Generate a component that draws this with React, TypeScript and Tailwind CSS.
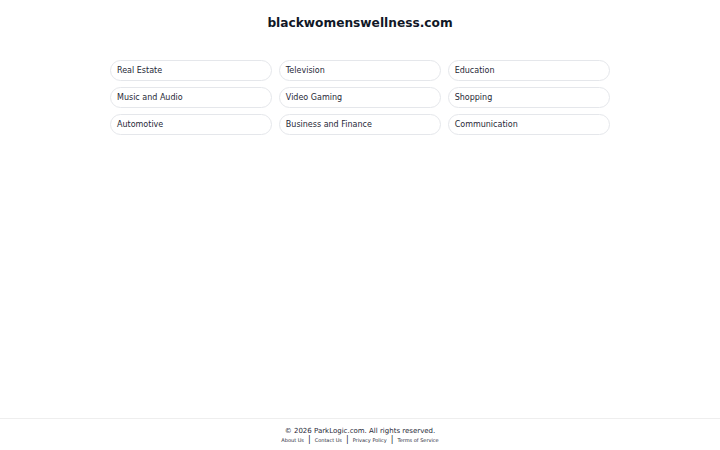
import React from "react";

const items = [
  "Real Estate",
  "Television",
  "Education",
  "Music and Audio",
  "Video Gaming",
  "Shopping",
  "Automotive",
  "Business and Finance",
  "Communication",
];

export default function App() {
  return (
    <div
      className="w-[720px] h-[450px] bg-white flex flex-col text-[#111827]"
      style={{ fontFamily: '"DejaVu Sans", sans-serif' }}
    >
      <div className="flex-1 flex flex-col">
        <h1 className="text-[12.2px] font-bold text-center pt-[15px] leading-[16px]">
          blackwomenswellness.com
        </h1>
        <div className="w-[500px] mx-auto mt-[29px] grid grid-cols-3 gap-x-[6.5px] gap-y-[6px]">
          {items.map((t) => (
            <div
              key={t}
              className="h-[21px] rounded-full border border-[#e5e7eb] flex items-center px-[6px] pt-[1px] text-[8px] leading-[10px] text-[#1f2937]"
            >
              {t}
            </div>
          ))}
        </div>
      </div>
      <footer className="h-[32px] border-t border-[#eeeeee] flex flex-col items-center pt-[7px]">
        <div className="text-[7px] leading-[10px] text-[#1f2937]">
          © 2026 ParkLogic.com. All rights reserved.
        </div>
        <div className="flex items-center text-[5px] leading-[8px] text-[#1f2937]">
          <span>About Us</span>
          <span className="mx-[4px] text-[8px]">|</span>
          <span>Contact Us</span>
          <span className="mx-[4px] text-[8px]">|</span>
          <span>Privacy Policy</span>
          <span className="mx-[4px] text-[8px]">|</span>
          <span>Terms of Service</span>
        </div>
      </footer>
    </div>
  );
}
